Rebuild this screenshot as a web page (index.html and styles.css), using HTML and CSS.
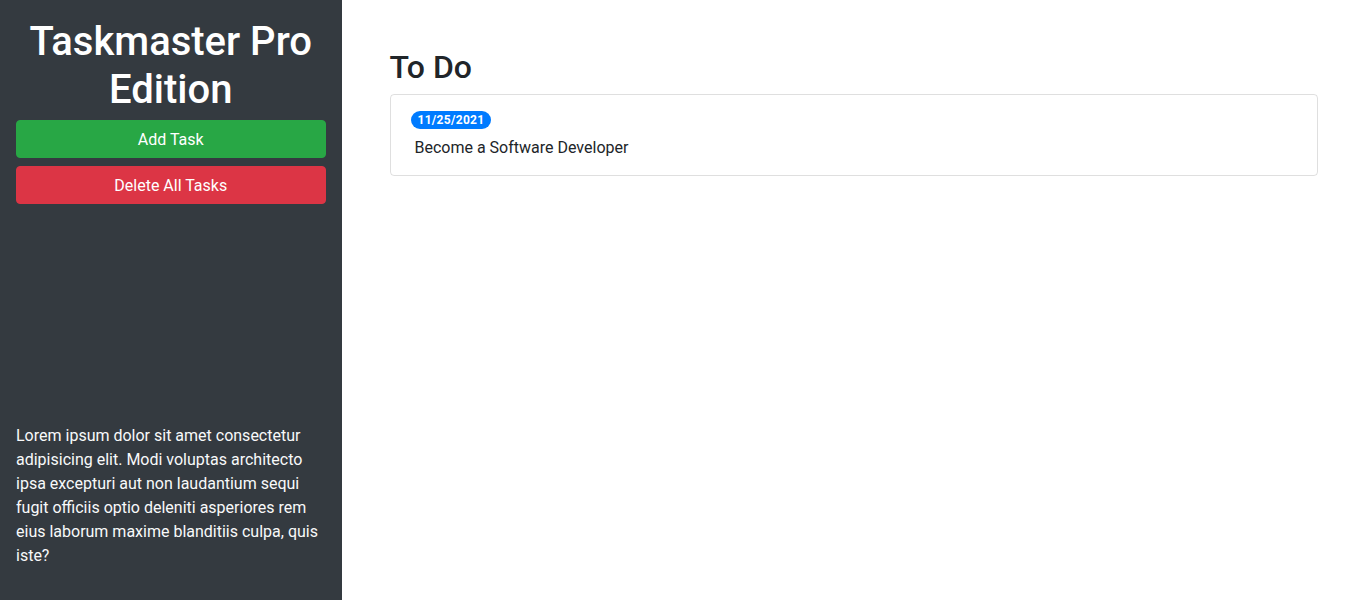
FILE: index.html
```html
<!DOCTYPE html>
<html lang="en">
<head>
<meta charset="utf-8">
<title>Taskmaster Pro</title>
<link rel="stylesheet" href="styles.css">
</head>
<body>
<div class="layout">
  <aside class="sidebar">
    <div class="sidebar-top">
      <h1 class="title">Taskmaster Pro Edition</h1>
      <button class="btn btn-success">Add Task</button>
      <button class="btn btn-danger">Delete All Tasks</button>
    </div>
    <p class="blurb">Lorem ipsum dolor sit amet consectetur adipisicing elit. Modi voluptas architecto ipsa excepturi aut non laudantium sequi fugit officiis optio deleniti asperiores rem eius laborum maxime blanditiis culpa, quis iste?</p>
  </aside>
  <main class="main">
    <h2 class="list-title">To Do</h2>
    <ul class="list-group">
      <li class="list-item">
        <span class="badge">11/25/2021</span>
        <p class="task-text">Become a Software Developer</p>
      </li>
    </ul>
  </main>
</div>
</body>
</html>
```
FILE: styles.css
```css
* { box-sizing: border-box; }
html, body { margin: 0; padding: 0; height: 100%; }
body {
  font-family: Roboto, "Noto Sans", sans-serif;
  font-size: 16px;
  line-height: 1.5;
  color: #212529;
  background: #fff;
}
.layout {
  display: flex;
  height: 100vh;
}
.sidebar {
  width: 25%;
  flex: 0 0 25%;
  background: #343a40;
  color: #f8f9fa;
  padding: 16px;
  display: flex;
  flex-direction: column;
  justify-content: space-between;
}
.sidebar-top {
  display: flex;
  flex-direction: column;
  gap: 8px;
}
.title {
  margin: 0;
  padding-top: 2px;
  margin-bottom: -2px;
  font-size: 40px;
  font-weight: 500;
  line-height: 1.2;
  text-align: center;
  color: #fff;
}
.btn {
  font-family: inherit;
  font-size: 16px;
  line-height: 1.5;
  padding: 7px 12px 5px;
  border: 1px solid transparent;
  border-radius: 4px;
  color: #fff;
  width: 100%;
  cursor: pointer;
}
.btn-success { background: #28a745; border-color: #28a745; }
.btn-danger { background: #dc3545; border-color: #dc3545; }
.blurb {
  margin: 0 0 16px;
}
.main {
  flex: 1;
  padding: 48px;
}
.list-title {
  margin: 0 0 8px;
  font-size: 32px;
  font-weight: 500;
  line-height: 1.2;
}
.list-group {
  list-style: none;
  margin: 0;
  padding: 0;
}
.list-item {
  border: 1px solid rgba(0,0,0,.125);
  border-radius: 4px;
  padding: 12px 20px;
}
.badge {
  display: inline-block;
  background: #007bff;
  color: #fff;
  font-size: 12px;
  font-weight: 700;
  line-height: 1;
  letter-spacing: 0.3px;
  padding: 3px 7px;
  border-radius: 10rem;
  vertical-align: baseline;
}
.task-text {
  margin: 5px 0 3px 4px;
}
```
